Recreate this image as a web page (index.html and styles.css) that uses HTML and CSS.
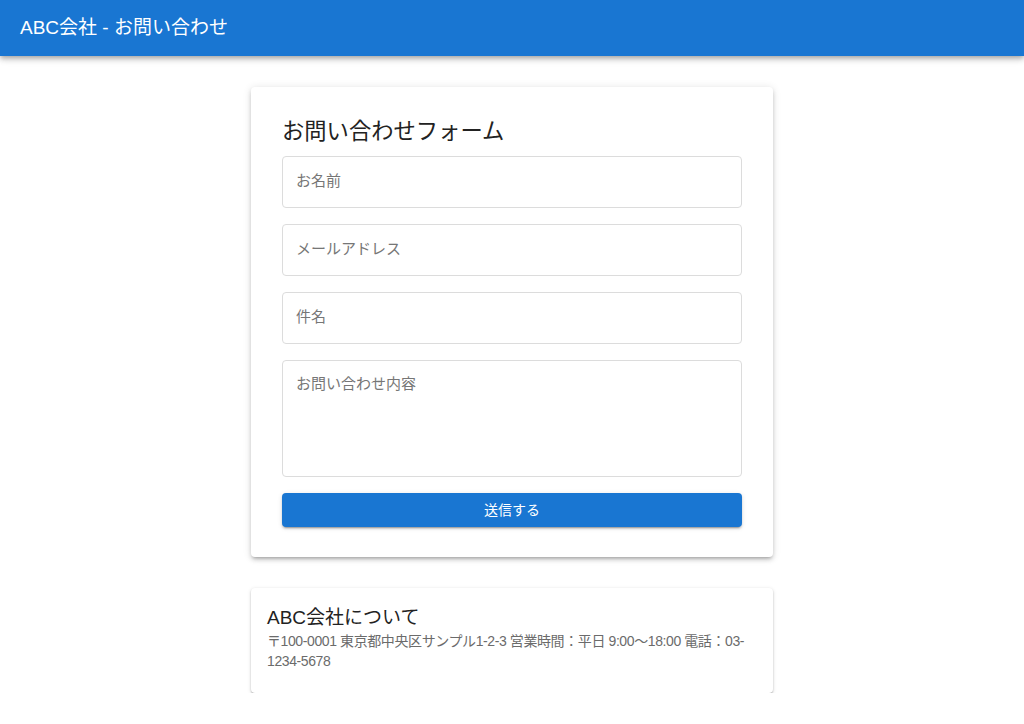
FILE: index.html
```html
<!DOCTYPE html>
<html lang="ja">
<head>
<meta charset="utf-8">
<title>ABC会社 - お問い合わせ</title>
<link rel="stylesheet" href="styles.css">
</head>
<body>
<header class="appbar">
  <div class="appbar-title">ABC会社 - お問い合わせ</div>
</header>
<main class="main">
  <section class="card card-form">
    <h1 class="form-title">お問い合わせフォーム</h1>
    <form class="form">
      <input class="field" type="text" placeholder="お名前">
      <input class="field" type="email" placeholder="メールアドレス">
      <input class="field" type="text" placeholder="件名">
      <textarea class="field field-area" placeholder="お問い合わせ内容"></textarea>
      <button class="submit" type="button">送信する</button>
    </form>
  </section>
  <section class="card card-about">
    <h2 class="about-title">ABC会社について</h2>
    <p class="about-text">〒100-0001 東京都中央区サンプル1-2-3 営業時間：平日 9:00〜18:00 電話：03-<wbr>1234-5678</p>
  </section>
</main>
</body>
</html>
```

FILE: styles.css
```css
* { box-sizing: border-box; }

body {
  margin: 0;
  background: #fff;
  font-family: "Liberation Sans", "Noto Sans CJK JP", sans-serif;
  color: rgba(0, 0, 0, 0.87);
}

.appbar {
  height: 56px;
  background: #1976d2;
  box-shadow: 0 2px 4px -1px rgba(0,0,0,0.2), 0 4px 5px 0 rgba(0,0,0,0.14), 0 1px 10px 0 rgba(0,0,0,0.12);
  display: flex;
  align-items: center;
  padding: 0 20px;
}

.appbar-title {
  color: #fff;
  font-size: 19px;
  line-height: 1;
  margin-top: -2px;
}

.main {
  display: flex;
  flex-direction: column;
  align-items: center;
  padding-top: 31px;
  gap: 31px;
}

.card {
  width: 522px;
  background: #fff;
  border-radius: 4px;
}

.card-form {
  padding: 31px 31px 30px;
  box-shadow: 0 3px 3px -2px rgba(0,0,0,0.2), 0 3px 4px 0 rgba(0,0,0,0.14), 0 1px 8px 0 rgba(0,0,0,0.12);
}

.form-title {
  margin: 0 0 10px 0;
  font-size: 22.3px;
  font-weight: 400;
  line-height: 28px;
  color: #222;
}

.form {
  display: flex;
  flex-direction: column;
  gap: 16px;
}

.field {
  display: block;
  width: 100%;
  height: 52px;
  border: 1px solid #dcdcdc;
  border-radius: 4px;
  padding: 0 13px 3px;
  font-family: inherit;
  font-size: 15px;
  color: #333;
  background: #fff;
  outline: none;
}

.field::placeholder { color: #767676; }

.field-area {
  height: 117px;
  padding: 12px 13px;
  resize: none;
  line-height: 22px;
}

.submit {
  height: 34px;
  border: 0;
  border-radius: 4px;
  padding: 0 0 3px;
  background: #1976d2;
  color: #fff;
  font-family: inherit;
  font-size: 14px;
  box-shadow: 0 3px 1px -2px rgba(0,0,0,0.2), 0 2px 2px 0 rgba(0,0,0,0.14), 0 1px 5px 0 rgba(0,0,0,0.12);
}

.card-about {
  padding: 16px 16px 22px;
  box-shadow: 0 2px 2px -1px rgba(0,0,0,0.25), 0 1px 2px 0 rgba(0,0,0,0.16), 0 1px 4px 0 rgba(0,0,0,0.12);
}

.about-title {
  margin: 0;
  font-size: 19px;
  font-weight: 400;
  line-height: 27px;
  color: #222;
}

.about-text {
  margin: 0;
  font-size: 14px;
  line-height: 20px;
  letter-spacing: -0.4px;
  color: #6b6b6b;
}
```
